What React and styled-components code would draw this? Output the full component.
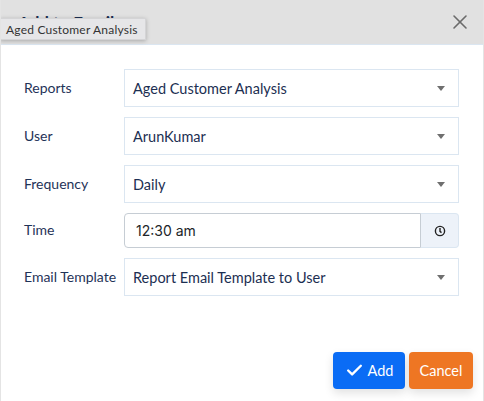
import React from "react";
import styled, { createGlobalStyle } from "styled-components";
import { FiCheck, FiX } from "react-icons/fi";

const GlobalStyle = createGlobalStyle`
  html, body {
    margin: 0;
    padding: 0;
    background: #e4e4e4;
  }
  body {
    font-family: "Lato", "Noto Sans", sans-serif;
  }
`;

const Dialog = styled.div`
  position: relative;
  box-sizing: border-box;
  width: 482px;
  height: 401px;
  margin-left: 1px;
  background: #fff;
  display: flex;
  flex-direction: column;
  overflow: hidden;
`;

const Header = styled.div`
  box-sizing: border-box;
  height: 45px;
  flex: none;
  background: #e1e1e1;
  border-bottom: 1px solid #dbe6f1;
  display: flex;
  align-items: center;
  justify-content: space-between;
  padding: 0 11px 0 17px;
`;

const Title = styled.h2`
  margin: 0;
  font-size: 17px;
  font-weight: 700;
  color: #1c2f52;
`;

const CloseButton = styled.button`
  border: 0;
  background: none;
  padding: 0;
  display: flex;
  color: #6b6b6b;
  font-size: 22px;
`;

const Tooltip = styled.div`
  position: absolute;
  top: 18px;
  left: -1px;
  height: 20px;
  padding: 0 7px 0 6px;
  display: flex;
  align-items: center;
  background: #e6e6e8;
  border: 1px solid #d4d4d6;
  border-left: 0;
  box-shadow: 0 1px 4px rgba(0, 0, 0, 0.25);
  font-size: 12px;
  letter-spacing: 0.2px;
  color: #333;
`;

const Form = styled.div`
  flex: 1;
  padding: 24px 24px 0 23px;
  display: flex;
  flex-direction: column;
  gap: 10px;
`;

const Row = styled.div`
  display: grid;
  grid-template-columns: 100px 1fr;
  align-items: center;
  height: ${({ $height }) => $height || 38}px;
`;

const Label = styled.label`
  font-size: 14px;
  color: #1f3358;
  margin-top: -2px;
`;

const Select = styled.div`
  box-sizing: border-box;
  height: 100%;
  border: 1px solid #dbe6f1;
  display: flex;
  align-items: center;
  justify-content: space-between;
  padding: 0 13px 0 8px;
  font-size: 14.5px;
  color: #1c2f52;
`;

const Caret = styled.span`
  width: 0;
  height: 0;
  border-left: 4px solid transparent;
  border-right: 4px solid transparent;
  border-top: 5px solid #6f6f6f;
`;

const TimeGroup = styled.div`
  display: flex;
  height: 100%;
`;

const TimeInput = styled.div`
  box-sizing: border-box;
  flex: 1;
  border: 1px solid #c6cdd4;
  border-radius: 4px 0 0 4px;
  display: flex;
  align-items: center;
  padding-left: 11px;
  font-family: "Inter", sans-serif;
  font-size: 14px;
  color: #212529;
`;

const TimeAddon = styled.div`
  box-sizing: border-box;
  width: 38px;
  border: 1px solid #dbe6f1;
  border-left: 0;
  border-radius: 0 4px 4px 0;
  background: #edf2f9;
  display: flex;
  align-items: center;
  justify-content: center;
`;

const Footer = styled.div`
  position: absolute;
  right: 10px;
  bottom: 12px;
  display: flex;
  gap: 4px;
`;

const Button = styled.button`
  box-sizing: border-box;
  height: 37px;
  width: ${({ $width }) => $width}px;
  border: 0;
  border-radius: 4px;
  background: ${({ $bg }) => $bg};
  color: #fff;
  font-family: inherit;
  font-size: 14.5px;
  display: flex;
  align-items: center;
  justify-content: center;
  gap: 4px;
  padding: 0;
  box-shadow: 0 4px 10px rgba(0, 0, 0, 0.12);
`;

const ClockIcon = () => (
  <svg width="12" height="12" viewBox="0 0 12 12" fill="none" stroke="#222" strokeWidth="1.4">
    <circle cx="6" cy="6" r="4.6" />
    <path d="M6 3v3.4l1.5 1.2" />
  </svg>
);

const selects = [
  { label: "Reports", value: "Aged Customer Analysis" },
  { label: "User", value: "ArunKumar" },
  { label: "Frequency", value: "Daily" },
];

export default function App() {
  return (
    <>
      <GlobalStyle />
      <Dialog>
        <Header>
          <Title>Add to Email</Title>
          <CloseButton>
            <FiX size={24} strokeWidth={1.6} />
          </CloseButton>
        </Header>
        <Tooltip>Aged Customer Analysis</Tooltip>
        <Form>
          {selects.map((s) => (
            <Row key={s.label}>
              <Label>{s.label}</Label>
              <Select>
                {s.value}
                <Caret />
              </Select>
            </Row>
          ))}
          <Row $height={35}>
            <Label>Time</Label>
            <TimeGroup>
              <TimeInput>12:30 am</TimeInput>
              <TimeAddon>
                <ClockIcon />
              </TimeAddon>
            </TimeGroup>
          </Row>
          <Row>
            <Label>Email Template</Label>
            <Select>
              Report Email Template to User
              <Caret />
            </Select>
          </Row>
        </Form>
        <Footer>
          <Button $bg="#0a6cf5" $width={72}>
            <FiCheck size={19} strokeWidth={3} />
            Add
          </Button>
          <Button $bg="#ee7623" $width={64}>
            Cancel
          </Button>
        </Footer>
      </Dialog>
    </>
  );
}
